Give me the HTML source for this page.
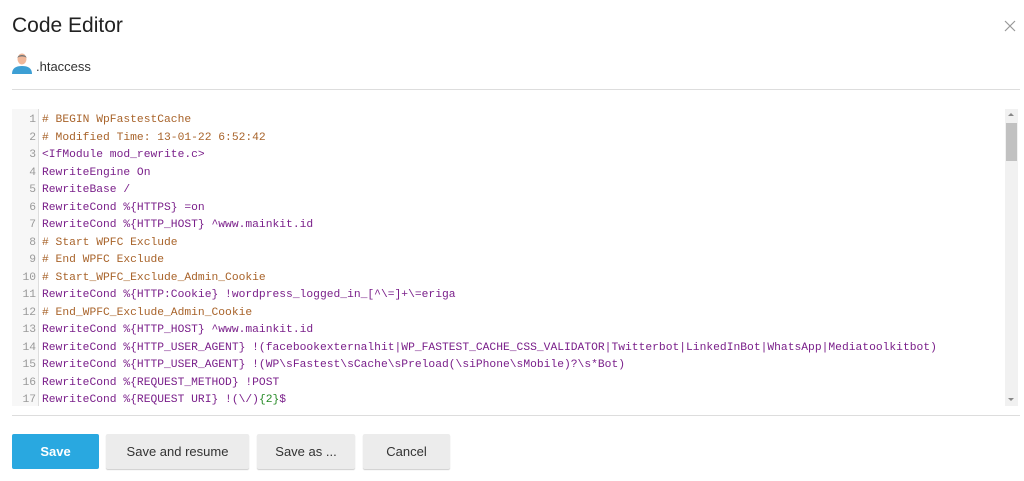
<!DOCTYPE html>
<html><head><style>
body{margin:0;width:1024px;height:481px;background:#fff;font-family:"Liberation Sans",sans-serif;position:relative;overflow:hidden}
h1{position:absolute;left:12px;top:14px;margin:0;font-weight:normal;font-size:21px;color:#222}
.x{position:absolute;left:1004px;top:20px;width:12px;height:12px}
.file{position:absolute;left:36px;top:59px;font-size:13px;color:#333}
.hr{position:absolute;left:12px;right:4px;height:1px;background:#ddd}
.ed{position:absolute;left:12px;top:109px;width:1008px;height:297px;overflow:hidden;background:#fff}
.gut{position:absolute;left:0;top:0;width:26px;height:297px;background:#f7f7f7;border-right:1px solid #ddd}
.code{position:absolute;left:0;top:3px;font-family:"Liberation Mono",monospace;font-size:11.3px;line-height:17.5px;white-space:pre}
.ln{display:inline-block;width:24px;text-align:right;color:#999;margin-right:6px}
.c{color:#a8632a}.k{color:#7a1f8a}.s{color:#8a3a9a}.g{color:#228822}
.sb{position:absolute;left:1005px;top:109px;width:13px;height:297px;background:#f1f1f1}
.th{position:absolute;left:1006px;top:123px;width:11px;height:38px;background:#c1c1c1}
.btn{position:absolute;top:434px;height:35px;line-height:35px;text-align:center;font-size:13px;color:#333;background:#ececec;box-shadow:0 1px 1px #ccc;border-radius:2px}
</style></head><body>
<h1>Code Editor</h1>
<svg class="x" viewBox="0 0 12 12"><path d="M1 1L11 11M11 1L1 11" stroke="#999" stroke-width="1.2"/></svg>
<svg style="position:absolute;left:11px;top:52px" width="22" height="22" viewBox="0 0 22 22"><ellipse cx="11" cy="7" rx="4.5" ry="5.5" fill="#f0b89a"/><path d="M6.5 6c0-4 9-4 9 0c-1-2-8-2-9 0z" fill="#777"/><path d="M1 22c0-6 4-8 10-8s10 2 10 8z" fill="#3d9fd4"/></svg>
<div class="file">.htaccess</div>
<div class="hr" style="top:89px"></div>
<div class="ed"><div class="gut"></div><div class="code"><span class="ln">1</span><span class="c"># BEGIN WpFastestCache</span>
<span class="ln">2</span><span class="c"># Modified Time: 13-01-22 6:52:42</span>
<span class="ln">3</span><span class="k">&lt;IfModule mod_rewrite.c&gt;</span>
<span class="ln">4</span><span class="k">RewriteEngine On</span>
<span class="ln">5</span><span class="k">RewriteBase /</span>
<span class="ln">6</span><span class="k">RewriteCond %{HTTPS} =on</span>
<span class="ln">7</span><span class="k">RewriteCond %{HTTP_HOST} ^www.mainkit.id</span>
<span class="ln">8</span><span class="c"># Start WPFC Exclude</span>
<span class="ln">9</span><span class="c"># End WPFC Exclude</span>
<span class="ln">10</span><span class="c"># Start_WPFC_Exclude_Admin_Cookie</span>
<span class="ln">11</span><span class="k">RewriteCond %{HTTP:Cookie} !wordpress_logged_in_[^\=]+\=eriga</span>
<span class="ln">12</span><span class="c"># End_WPFC_Exclude_Admin_Cookie</span>
<span class="ln">13</span><span class="k">RewriteCond %{HTTP_HOST} ^www.mainkit.id</span>
<span class="ln">14</span><span class="k">RewriteCond %{HTTP_USER_AGENT} !(facebookexternalhit|WP_FASTEST_CACHE_CSS_VALIDATOR|Twitterbot|LinkedInBot|WhatsApp|Mediatoolkitbot)</span>
<span class="ln">15</span><span class="k">RewriteCond %{HTTP_USER_AGENT} !(WP\sFastest\sCache\sPreload(\siPhone\sMobile)?\s*Bot)</span>
<span class="ln">16</span><span class="k">RewriteCond %{REQUEST_METHOD} !POST</span>
<span class="ln">17</span><span class="k">RewriteCond %{REQUEST URI} !(\/)<span class="g">{2}</span>$</span>
</div></div>
<div class="sb"></div><div class="th"></div>
<div style="position:absolute;left:1008px;top:113px;width:0;height:0;border:3px solid transparent;border-bottom-color:#888;border-top:0"></div>
<div style="position:absolute;left:1008px;top:398px;width:0;height:0;border:3px solid transparent;border-top-color:#888;border-bottom:0"></div>
<div class="hr" style="top:415px"></div>
<div class="btn" style="left:12px;width:87px;background:#29a8e0;color:#fff;font-weight:bold;box-shadow:none">Save</div>
<div class="btn" style="left:106px;width:143px">Save and resume</div>
<div class="btn" style="left:257px;width:98px">Save as ...</div>
<div class="btn" style="left:363px;width:87px">Cancel</div>
</body></html>
